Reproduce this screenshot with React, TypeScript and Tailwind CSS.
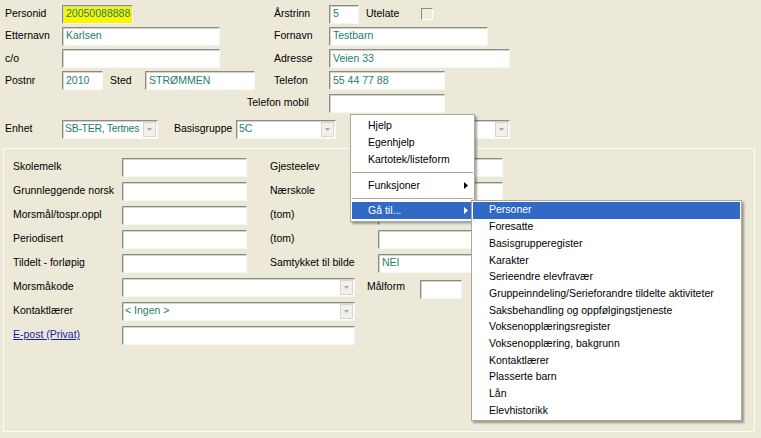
import React from "react";

function Label({ className = "", children }: { className?: string; children?: React.ReactNode }) {
  return <div className={`shrink-0 whitespace-nowrap ${className}`}>{children}</div>;
}

function Field({ className = "", value = "", yellow = false }: { className?: string; value?: string; yellow?: boolean }) {
  return (
    <div
      className={`h-[19px] shrink-0 flex items-center pl-[3px] overflow-hidden whitespace-nowrap text-[#1e7f66] border border-t-[#8a8a86] border-l-[#8a8a86] border-r-[#f7f6f1] border-b-[#f7f6f1] shadow-[inset_1px_1px_0_#d4d2c8] ${
        yellow ? "bg-[#f6f600]" : "bg-white"
      } ${className}`}
    >
      {value}
    </div>
  );
}

function Combo({ className = "", value = "", tight = false }: { className?: string; value?: string; tight?: boolean }) {
  return (
    <div
      className={`h-[19px] shrink-0 flex items-center bg-white border border-t-[#8a8a86] border-l-[#8a8a86] border-r-[#f7f6f1] border-b-[#f7f6f1] shadow-[inset_1px_1px_0_#d4d2c8] ${className}`}
    >
      <div className={`flex-1 pl-[2px] whitespace-nowrap text-[#1e7f66] ${tight ? "tracking-[-0.3px]" : ""}`}>{value}</div>
      <div className="w-[13px] h-[15px] mr-[1px] shrink-0 flex items-center justify-center bg-[#f1f0ea] border border-[#d9d7cc]">
        <svg width="5" height="3" viewBox="0 0 5 3">
          <path d="M0 0 L5 0 L2.5 3 Z" fill="#a8a8a4" />
        </svg>
      </div>
    </div>
  );
}

function Arrow({ color }: { color: string }) {
  return (
    <svg width="4" height="7" viewBox="0 0 4 7">
      <path d="M0 0 L4 3.5 L0 7 Z" fill={color} />
    </svg>
  );
}

const submenu = [
  "Foresatte",
  "Basisgrupperegister",
  "Karakter",
  "Serieendre elevfravær",
  "Gruppeinndeling/Serieforandre tildelte aktiviteter",
  "Saksbehandling og oppfølgingstjeneste",
  "Voksenopplæringsregister",
  "Voksenopplæring, bakgrunn",
  "Kontaktlærer",
  "Plasserte barn",
  "Lån",
  "Elevhistorikk",
];

export default function App() {
  return (
    <div className="relative w-[761px] h-[438px] overflow-hidden bg-[#ECE9D8] text-black text-[10.5px] font-['Liberation_Sans',Arial,sans-serif]">
      {/* head fields */}
      <div className="pt-[4px] pl-[5px] flex flex-col gap-[2.25px]">
        <div className="h-[20px] flex items-center">
          <Label className="w-[57px]">Personid</Label>
          <Field className="w-[71px]" value="20050088888" yellow />
          <div className="w-[141px] shrink-0" />
          <Label className="w-[55px]">Årstrinn</Label>
          <Field className="w-[30px]" value="5" />
          <Label className="ml-[7px] w-[55px]">Utelate</Label>
          <div className="w-[12px] h-[12px] border border-t-[#8a8a86] border-l-[#8a8a86] border-r-white border-b-white bg-[#efede3]" />
        </div>
        <div className="h-[20px] flex items-center">
          <Label className="w-[57px]">Etternavn</Label>
          <Field className="w-[158px]" value="Karlsen" />
          <div className="w-[54px] shrink-0" />
          <Label className="w-[55px]">Fornavn</Label>
          <Field className="w-[159px]" value="Testbarn" />
        </div>
        <div className="h-[20px] flex items-center">
          <Label className="w-[57px]">c/o</Label>
          <Field className="w-[158px]" />
          <div className="w-[54px] shrink-0" />
          <Label className="w-[55px]">Adresse</Label>
          <Field className="w-[181px]" value="Veien 33" />
        </div>
        <div className="h-[20px] flex items-center">
          <Label className="w-[57px]">Postnr</Label>
          <Field className="w-[41px]" value="2010" />
          <Label className="ml-[7px] w-[35px]">Sted</Label>
          <Field className="w-[110px]" value="STRØMMEN" />
          <div className="w-[19px] shrink-0" />
          <Label className="w-[55px]">Telefon</Label>
          <Field className="w-[116px]" value="55 44 77 88" />
        </div>
        <div className="h-[20px] flex items-center">
          <div className="w-[242px] shrink-0" />
          <Label className="w-[82px]">Telefon mobil</Label>
          <Field className="w-[116px]" />
        </div>
        <div className="h-[20px] mt-[4px] flex items-center">
          <Label className="w-[57px]">Enhet</Label>
          <Combo className="w-[96px]" value="SB-TER, Tertnes" tight />
          <Label className="ml-[16px] w-[62px]">Basisgruppe</Label>
          <Combo className="w-[100px]" value="5C" />
          <Combo className="ml-[64px] w-[110px]" />
        </div>
      </div>

      {/* lower panel */}
      <div className="mt-[9px] ml-[3px] w-[752px] h-[284px] border border-[#fbfaf5] pt-[6px] pl-[9px] flex flex-col">
        <div className="h-[24px] flex items-center">
          <Label className="w-[109px]">Skolemelk</Label>
          <Field className="w-[125px]" />
          <Label className="ml-[23px] w-[108px]">Gjesteelev</Label>
          <Field className="w-[125px]" />
        </div>
        <div className="h-[24px] flex items-center">
          <Label className="w-[109px]">Grunnleggende norsk</Label>
          <Field className="w-[125px]" />
          <Label className="ml-[23px] w-[108px]">Nærskole</Label>
          <Field className="w-[125px]" />
        </div>
        <div className="h-[24px] flex items-center">
          <Label className="w-[109px]">Morsmål/tospr.oppl</Label>
          <Field className="w-[125px]" />
          <Label className="ml-[23px] w-[108px]">(tom)</Label>
          <Field className="w-[125px]" />
        </div>
        <div className="h-[24px] flex items-center">
          <Label className="w-[109px]">Periodisert</Label>
          <Field className="w-[125px]" />
          <Label className="ml-[23px] w-[108px]">(tom)</Label>
          <Field className="w-[125px]" />
        </div>
        <div className="h-[24px] flex items-center">
          <Label className="w-[109px]">Tildelt - forløpig</Label>
          <Field className="w-[125px]" />
          <Label className="ml-[23px] w-[108px]">Samtykket til bilde</Label>
          <Field className="w-[125px]" value="NEI" />
        </div>
        <div className="h-[24px] flex items-center">
          <Label className="w-[109px]">Morsmåkode</Label>
          <Combo className="w-[233px]" />
          <Label className="ml-[12px] w-[53px]">Målform</Label>
          <Field className="w-[42px] mt-[5px]" />
        </div>
        <div className="h-[24px] flex items-center">
          <Label className="w-[109px]">Kontaktlærer</Label>
          <Combo className="w-[233px]" value="< Ingen >" />
        </div>
        <div className="h-[24px] flex items-center">
          <Label className="w-[109px] text-[#1a1ab0] underline">E-post (Privat)</Label>
          <Field className="w-[233px]" />
        </div>
      </div>

      {/* context menu */}
      <div className="absolute left-[350px] top-[114px] w-[125px] bg-white border border-[#aca899] shadow-[2px_2px_2px_rgba(0,0,0,0.35)] py-[2px]">
        <div className="h-[17px] flex items-center pl-[17px]">Hjelp</div>
        <div className="h-[17px] flex items-center pl-[17px]">Egenhjelp</div>
        <div className="h-[17px] flex items-center pl-[17px]">Kartotek/listeform</div>
        <div className="h-[9px] flex items-center mx-[1px]">
          <div className="w-full h-px bg-[#aca899]" />
        </div>
        <div className="h-[17px] flex items-center justify-between pl-[17px] pr-[6px]">
          <span>Funksjoner</span>
          <Arrow color="#000" />
        </div>
        <div className="h-[8px] flex items-center mx-[1px]">
          <div className="w-full h-px bg-[#aca899]" />
        </div>
        <div className="h-[17px] mx-[1px] flex items-center justify-between pl-[16px] pr-[5px] bg-[#316AC5] text-white">
          <span>Gå til...</span>
          <Arrow color="#fff" />
        </div>
      </div>

      {/* submenu */}
      <div className="absolute left-[471px] top-[200px] w-[271px] bg-white border border-[#aca899] shadow-[2px_2px_2px_rgba(0,0,0,0.35)] py-[1px]">
        <div className="h-[16.7px] mx-[1px] flex items-center pl-[16px] bg-[#316AC5] text-white">Personer</div>
        {submenu.map((s) => (
          <div key={s} className="h-[16.7px] flex items-center pl-[17px] whitespace-nowrap">
            {s}
          </div>
        ))}
      </div>
    </div>
  );
}
